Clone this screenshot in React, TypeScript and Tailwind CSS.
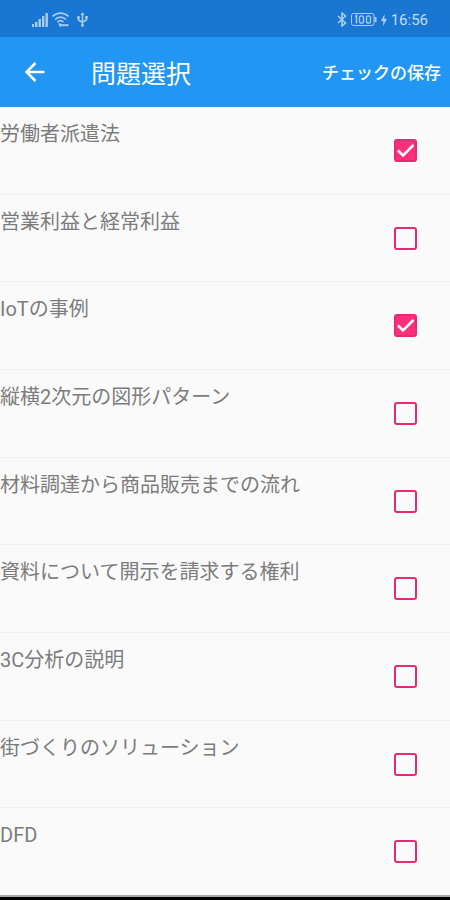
import { useState } from "react"

interface Question {
    id: number
    title: string
    checked: boolean
}

const initialQuestions: Question[] = [
    { id: 1, title: "労働者派遣法", checked: true },
    { id: 2, title: "営業利益と経常利益", checked: false },
    { id: 3, title: "IoTの事例", checked: true },
    { id: 4, title: "縦横2次元の図形パターン", checked: false },
    { id: 5, title: "材料調達から商品販売までの流れ", checked: false },
    { id: 6, title: "資料について開示を請求する権利", checked: false },
    { id: 7, title: "3C分析の説明", checked: false },
    { id: 8, title: "街づくりのソリューション", checked: false },
    { id: 9, title: "DFD", checked: false },
]

const StatusBar = () => (
    <div className="flex h-[37px] items-center justify-between bg-[#1976d2] pt-0.5 pr-[22px] pl-8 text-[#a9cdf0]">
        <div className="flex items-center gap-1">
            {/* Signal */}
            <svg width="16" height="14" viewBox="0 0 16 14" fill="currentColor">
                <rect x="0" y="11" width="2" height="3" />
                <rect x="3" y="9" width="2.4" height="5" />
                <rect x="6.5" y="6" width="2.4" height="8" />
                <rect x="10" y="3" width="2.4" height="11" />
                <rect x="13.5" y="0" width="2.4" height="14" />
            </svg>
            {/* Wifi */}
            <svg width="17" height="15" viewBox="0 0 17 15" fill="none" stroke="currentColor" strokeWidth="1.7">
                <path d="M0.5 4.5C5 0 12 0 16.5 4.5" />
                <path d="M3 7.5C6.2 4.3 10.8 4.3 14 7.5" />
                <path d="M5.5 10C7.5 8.2 9.5 8.2 11.5 10" />
                <path d="M7 11.5l1.5 2.5 1-2" />
                <path d="M10 13.2h6.5" strokeWidth="2" />
            </svg>
            {/* USB */}
            <svg className="ml-1" width="11" height="15" viewBox="0 0 11 15" fill="none" stroke="currentColor" strokeWidth="1.5">
                <path d="M5.5 2v11M1.5 5v3l4 2.5M9.5 4.5V8l-4 2" />
                <path d="M5.5 0l2 3h-4z" fill="currentColor" stroke="none" />
                <circle cx="5.5" cy="13.3" r="1.5" fill="currentColor" stroke="none" />
                <circle cx="1.5" cy="5.5" r="1.4" fill="currentColor" stroke="none" />
                <rect x="8.2" y="4" width="2.6" height="2.6" fill="currentColor" stroke="none" />
            </svg>
        </div>
        <div className="flex items-center gap-1">
            {/* Bluetooth */}
            <svg width="10" height="15" viewBox="0 0 10 15" fill="none" stroke="currentColor" strokeWidth="1.6">
                <path d="M1 4l7.5 7L5 14V1l3.5 3L1 11" />
            </svg>
            {/* Battery */}
            <svg width="26" height="13" viewBox="0 0 26 13" fill="none" stroke="currentColor">
                <rect x="0.5" y="0.5" width="22.5" height="12" rx="2" />
                <path d="M24.5 4v5" strokeWidth="2" />
                <path d="M4 3.5l1.5-1V10.5" strokeWidth="1.5" />
                <rect x="8.5" y="2.8" width="4" height="7.4" rx="2" strokeWidth="1.3" />
                <rect x="15.5" y="2.8" width="4" height="7.4" rx="2" strokeWidth="1.3" />
            </svg>
            {/* Charging */}
            <svg width="6" height="12" viewBox="0 0 6 12" fill="currentColor">
                <path d="M3.5 0L0 7h2.2L2 12l4-7H3.5z" />
            </svg>
            <span className="text-[15px] leading-5 text-[#c3dcf5]">16:56</span>
        </div>
    </div>
)

const AppBar = () => (
    <header className="flex h-[70px] items-center bg-[#2196f3] pr-[9px] pl-6 text-white">
        <button type="button" aria-label="戻る">
            <svg width="22" height="22" viewBox="0 0 22 22" fill="none" stroke="currentColor" strokeWidth="2.5">
                <path d="M20.5 11H3M11.5 2L2.5 11l9 9" />
            </svg>
        </button>
        <h1 className="ml-[45px] flex-1 pt-1.5 text-[25px] leading-8">問題選択</h1>
        <button type="button" className="pt-0.5 text-[17px] leading-6 font-medium">
            チェックの保存
        </button>
    </header>
)

interface QuestionRowProps {
    question: Question
    onToggle: (id: number) => void
}

const QuestionRow = ({ question, onToggle }: QuestionRowProps) => (
    <li className="flex min-h-20 flex-1 border-b border-[#f0f0f0] last:border-b-0">
        <label className="flex flex-1 cursor-pointer items-center justify-between pr-[33px]">
            <span className="self-start pt-[13px] text-xl leading-7 text-[#7c7c7c]">{question.title}</span>
            <span className="grid">
                <input
                    type="checkbox"
                    className="peer col-start-1 row-start-1 size-[23px] appearance-none rounded-[3px] border-2 border-[#e32c74] checked:bg-[#ff2f7c]"
                    checked={question.checked}
                    onChange={() => onToggle(question.id)}
                />
                <svg
                    className="pointer-events-none invisible col-start-1 row-start-1 peer-checked:visible"
                    width="23"
                    height="23"
                    viewBox="0 0 23 23"
                    fill="none"
                    stroke="white"
                    strokeWidth="2.5"
                >
                    <path d="M4 11.5l5 5L19.5 6" />
                </svg>
            </span>
        </label>
    </li>
)

const App = () => {
    const [questions, setQuestions] = useState(initialQuestions)

    const handleToggle = (id: number) => {
        setQuestions((prev) => prev.map((q) => (q.id === id ? { ...q, checked: !q.checked } : q)))
    }

    return (
        <div className="flex min-h-screen flex-col bg-[#fafafa] font-[Roboto,'Noto_Sans_CJK_JP',sans-serif]">
            <StatusBar />
            <AppBar />
            <ul className="flex flex-1 flex-col">
                {questions.map((question) => (
                    <QuestionRow key={question.id} question={question} onToggle={handleToggle} />
                ))}
            </ul>
            <div className="h-[5px] border-t-2 border-[#a8a8a8] bg-black" />
        </div>
    )
}

export default App
